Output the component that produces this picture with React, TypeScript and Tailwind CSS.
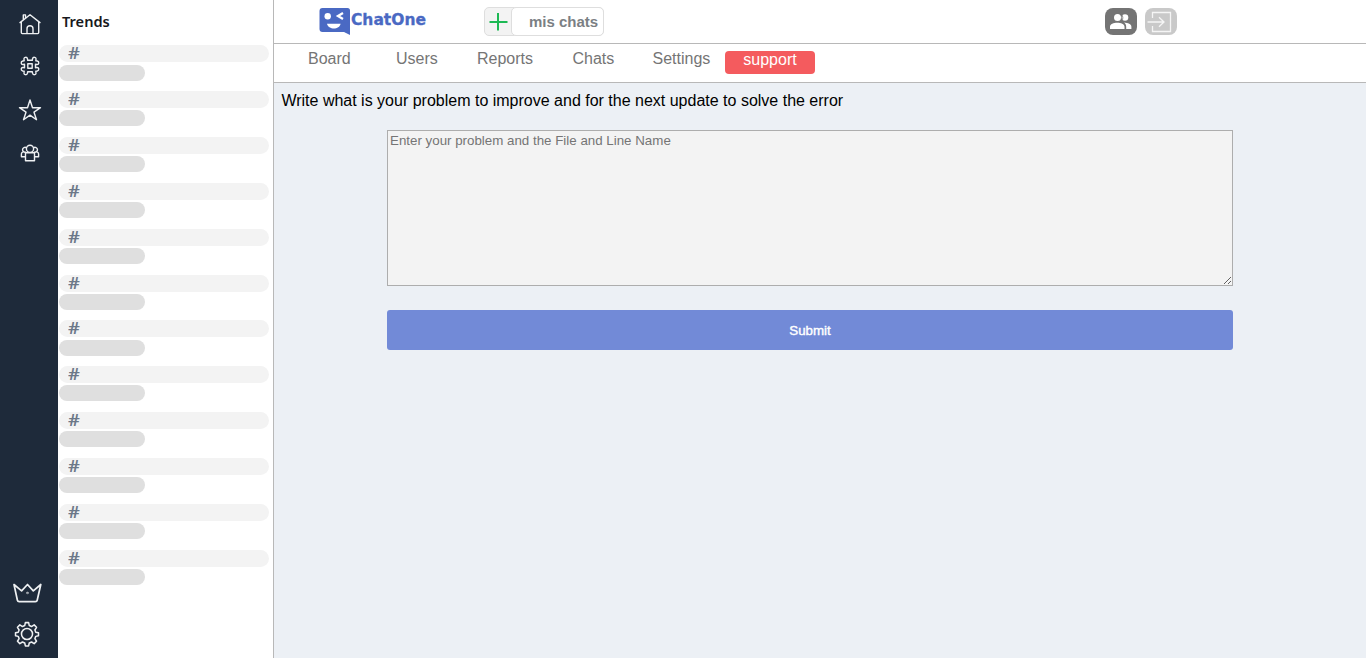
import type { ReactNode } from "react";

const tabs = [
  { label: "Board", className: "ml-[34px] w-[88px]" },
  { label: "Users", className: "w-[81px]" },
  { label: "Reports", className: "w-[95.5px]" },
  { label: "Chats", className: "w-20" },
  { label: "Settings", className: "w-[72.5px]" },
];

const trends = Array.from({ length: 12 }, (_, i) => i);

function Icon({ children, className }: { children: ReactNode; className: string }) {
  return (
    <svg
      viewBox="0 0 24 24"
      fill="none"
      stroke="#eef0f2"
      strokeWidth="1.4"
      strokeLinecap="round"
      strokeLinejoin="round"
      className={`block shrink-0 ${className}`}
    >
      {children}
    </svg>
  );
}

function Sidebar() {
  return (
    <nav className="flex w-[58px] shrink-0 flex-col bg-[#1e2a3a]">
      <Icon className="mt-3 ml-[18px] size-6">
        <path d="M2 10.6 12 2.7l10 7.9M3.3 10v10.6q0 1 1 1h15.4q1 0 1-1V10M5.3 7.8V2.9h2.2v3M9 21.3v-4.5q0-3 3-3t3 3v4.5" />
      </Icon>
      <Icon className="mt-[18px] ml-[18px] size-6">
        <path d="M9.7 6.3 9.5 4.8C9 2.5 5.6 3 6 5.3l.2 1.5-1.5.2c-2.3.5-1.8 3.8.5 3.5l1.300-.2v3.400l-1.300-.2c-2.300-.3-2.800 3-.5 3.500l1.500.2-.2 1.500c-.4 2.300 3 2.800 3.500.5l.2-1.500h4.600l.2 1.500c.5 2.300 3.900 1.800 3.500-.5l-.2-1.500 1.500-.2c2.300-.5 1.800-3.800-.5-3.500l-1.300.2v-3.400l1.300.2c2.300.3 2.800-3 .5-3.500l-1.500-.2.2-1.500c.4-2.300-3-2.800-3.500-.5l-.2 1.500zM9.800 9.800h4.400v4.400H9.800z" />
      </Icon>
      <Icon className="mt-5 ml-[18px] size-6">
        <path d="m12 2 2.500 7.700h8L16 14.200l2.500 7.500-6.500-4.600-6.500 4.600L8 14.200 1.500 9.700h8z" />
      </Icon>
      <Icon className="mt-[19px] ml-[18px] size-6">
        <circle cx="12" cy="7.8" r="3.6" />
        <path d="M7.500 11.700h9v8.100h-9zM8.300 6.600a2.500 2.500 0 1 0-.7 4.600M15.700 6.600a2.500 2.500 0 1 1 .7 4.600M4.600 11.100q-1.200.4-1.200 2v2.700h4.100M19.400 11.100q1.200.4 1.200 2v2.700h-4.100" />
      </Icon>
      <svg
        viewBox="0 0 30 22"
        fill="none"
        stroke="#eef0f2"
        strokeWidth="1.7"
        strokeLinejoin="round"
        className="mt-auto ml-3 h-[22px] w-[30px] shrink-0"
      >
        <path d="m2 2.500 7.600 6.400 5.900-6.400 5.800 6.400 7.500-6.400-3.600 15.800q-.3 1.300-1.800 1.300H7.200q-1.500 0-1.800-1.300z" />
        <circle cx="15.500" cy="11" r=".3" />
      </svg>
      <Icon className="mt-[17px] mb-[11px] ml-3.5 size-[26px]">
        <circle cx="12" cy="12" r="5.100" />
        <path d="M10.500 1.500h3l.6 2.700 2.100.9 2.400-1.500 2.200 2.200-1.500 2.500.8 2 2.500.5v2.800l-2.500.6-.8 2 1.500 2.500-2.200 2.200-2.400-1.500-2.100.9-.6 2.700h-3l-.6-2.700-2.100-.9-2.400 1.500-2.200-2.200 1.500-2.500-.8-2-2.500-.6v-2.800l2.500-.5.8-2-1.500-2.500 2.200-2.200 2.400 1.500 2.100-.9z" />
      </Icon>
    </nav>
  );
}

function Trends() {
  return (
    <aside className="flex w-[216px] shrink-0 flex-col border-r border-[#b8b8b8] bg-white pl-px">
      <h2 className="h-[45.42px] shrink-0 pt-2.5 pl-[3px] font-['Noto_Sans',sans-serif] text-[14.6px] leading-[22px] font-semibold text-[#17191c]">
        Trends
      </h2>
      {trends.map((i) => (
        <div key={i} className="h-[45.83px] shrink-0">
          <div className="h-[17px] w-[210px] rounded-full bg-[#f3f3f3] pl-[9px] font-['Noto_Sans',sans-serif] text-base leading-[17px] font-semibold text-[#6c7888]">
            <span className="inline-block origin-left scale-x-[1.15]">#</span>
          </div>
          <div className="mt-[2.18px] h-4 w-[86px] rounded-full bg-[#dfdfdf]" />
        </div>
      ))}
    </aside>
  );
}

function Logo() {
  return (
    <svg viewBox="0 0 110 30" className="ml-[45px] h-[30px] w-[110px] shrink-0">
      <path d="M3.500 1h25q2.500 0 2.500 2.500V28l-6-3H3.500Q.5 25 .5 22V4q0-3 3-3z" fill="#4a69c3" />
      <circle cx="8.700" cy="9.300" r="3.200" fill="white" />
      <path d="m24 6-5 3 5 3" fill="none" stroke="white" strokeWidth="2.300" />
      <path d="M8 16.800h13.600c-1 6.200-12.200 6.500-13.600 0z" fill="white" />
      <text
        x="32"
        y="18.300"
        fill="#4a69c3"
        stroke="#4a69c3"
        strokeWidth=".3"
        textLength="75"
        lengthAdjust="spacingAndGlyphs"
        className="font-['DejaVu_Sans',sans-serif] text-[15px] font-bold"
      >
        ChatOne
      </text>
    </svg>
  );
}

function Header() {
  return (
    <header className="flex h-11 shrink-0 items-start border-b border-[#b8b8b8] bg-white pt-[7px]">
      <Logo />
      <button className="ml-[55px] flex h-[29px] w-[120px] rounded-[5px] border border-[#dedede] bg-[#f3f3f3]">
        <svg viewBox="0 0 26 27" stroke="#1db954" strokeWidth="2" className="h-[27px] w-[26px] shrink-0">
          <path d="M4.500 14h18M13 5v17.500" />
        </svg>
        <span className="-my-px -mr-px h-[29px] flex-1 rounded-[5px] border border-[#dedede] bg-white pl-[17px] text-left text-[15px] leading-[27px] font-bold text-[#7b7f84]">
          mis chats
        </span>
      </button>
      <button className="mt-px ml-[501px] flex h-[27px] w-8 items-center justify-center rounded-[8px] bg-[#747474]">
        <svg viewBox="0 0 24 20" fill="white" className="h-5 w-6">
          <circle cx="8.500" cy="5.500" r="3.500" />
          <circle cx="16" cy="5.500" r="3.300" />
          <path d="M1 17v-2.200c0-5.400 14.500-5.400 14.500 0V17zM15 10.500c4 .2 7.400 1.700 7.400 4.300V17h-5.200v-2.300c0-1.800-.8-3.200-2.200-4.200z" />
          <path d="M12.500 2.500c1.800 1.600 1.800 5 0 6.600" fill="none" stroke="#747474" strokeWidth=".8" />
        </svg>
      </button>
      <button className="mt-px ml-2 flex h-[27px] w-8 items-center justify-center rounded-[8px] bg-[#c9c9c9]">
        <svg viewBox="0 0 32 27" fill="none" stroke="#f5f5f5" strokeWidth="1.300" className="h-[27px] w-8">
          <path d="M7.500 10V4.500h18v19h-18V18M2.500 14h16M14 9.200l5 4.800-5 4.800" />
        </svg>
      </button>
    </header>
  );
}

function Tabs() {
  return (
    <div className="flex h-[39px] shrink-0 items-start border-b border-[#b8b8b8] bg-white text-base leading-[18px] text-[#757575]">
      {tabs.map((tab) => (
        <button key={tab.label} className={`mt-1.5 shrink-0 text-left ${tab.className}`}>
          {tab.label}
        </button>
      ))}
      <button className="mt-[7px] h-[23px] w-[90px] shrink-0 rounded bg-[#f45b5e] pb-[5px] text-center text-white">
        support
      </button>
    </div>
  );
}

export default function App() {
  return (
    <div className="flex h-[658px] w-[1366px] overflow-hidden font-['Liberation_Sans',Arial,sans-serif]">
      <Sidebar />
      <Trends />
      <div className="flex min-w-0 flex-1 flex-col bg-[#ecf0f5]">
        <Header />
        <Tabs />
        <main className="flex flex-col pl-[7px]">
          <p className="mt-[9px] pl-[0.4px] text-base leading-[18px] text-black">
            Write what is your problem to improve and for the next update to solve the error
          </p>
          <form className="mt-5 ml-[106px] flex w-[846px] flex-col">
            <textarea
              placeholder="Enter your problem and the File and Line Name"
              className="block h-[156px] w-full resize border border-[#adadad] bg-[#f3f3f3] p-0.5 text-[13.333px] leading-[15px] outline-none placeholder:text-[#757575]"
            />
            <button
              type="button"
              className="mt-6 h-10 rounded-[3px] bg-[#728ad7] pt-px text-[13.333px] text-white [-webkit-text-stroke:0.4px_white]"
            >
              Submit
            </button>
          </form>
        </main>
      </div>
    </div>
  );
}
